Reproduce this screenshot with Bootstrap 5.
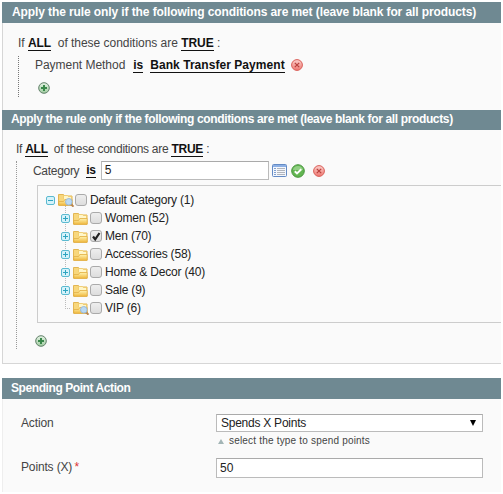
<!DOCTYPE html>
<html lang="en">
<head>
<meta charset="utf-8">
<meta name="viewport" content="width=device-width, initial-scale=1">
<title>Rule conditions</title>
<link href="https://cdn.jsdelivr.net/npm/bootstrap@5.3.0/dist/css/bootstrap.min.css" rel="stylesheet">
<style>
body{font:12px/18px "Liberation Sans",Arial,sans-serif;color:#444;background:#fff;overflow:hidden}
.page{width:499px;margin-left:2px;padding-top:2px;height:492px;overflow:hidden}
.bar{background:#6f8992;color:#fff;font-weight:700;white-space:nowrap}
.panel{background:#fafafa;border-left:1px solid #d6d6d6}
.ln{white-space:nowrap}
.ln b{color:#111;border-bottom:1px solid #111;line-height:13px;display:inline-block}
.ln.d-flex b{margin-top:1px}
.h1x{height:21px;line-height:20px;padding-left:10px;letter-spacing:-.1px}
.h2x{height:20px;line-height:19px;padding-left:9px;letter-spacing:-.36px}
.h3x{height:21px;line-height:20px;padding-left:9px;letter-spacing:-.42px}
.p1{height:87px;padding:11px 0 0 15px}
.p1 .ln{letter-spacing:-.03px}
.p2{height:234px;padding:10px 0 0 13px;border-bottom:1px solid #d6d6d6}
.p2>.ln{letter-spacing:-.27px}
.p3{height:94px;padding:15px 0 0 18px;border-left-color:#eee}
.rule1{border-left:1px dotted #777;height:41px;margin-top:4px;padding-left:16px}
.rule2{border-left:1px dotted #999;height:188px;margin-top:3px;padding-left:16px}
.catline{letter-spacing:-.3px}
.field{background:#fff;border:1px solid #bbb;border-top-color:#aaa;height:19px;line-height:17px;color:#222}
.tree{border:1px solid #ccc;border-right:0;height:138px;margin:5px 0 0 4px;padding:5px 0 0 8px;color:#222;position:relative}
.trow{height:18px;line-height:18px;white-space:nowrap}
.trow svg{position:relative;z-index:1}
.kid{padding-left:15px}
.ck{width:12px;height:12px;border:1px solid #aaa;border-radius:3px;background:linear-gradient(#eee,#ddd);flex:none}
.ck svg{margin:-1px}
svg{display:block;flex:none}
.guide{position:absolute;left:27px;top:19px;height:104px;border-left:1px dotted #bbb}
.lab{width:195px;letter-spacing:-.15px}
.bank{margin-left:7px;letter-spacing:.05px}
.del1{margin-left:6px}
.add1{margin:8px 0 0 3px}
.isb{margin-left:7px}
.catf{width:168px;margin-left:5px;padding-left:3px;letter-spacing:0}
.book{margin-left:3px}
.okic{margin-left:4px}
.del2{margin-left:8px}
.add2{margin:12px 0 0 2px}
.f{margin-left:3px;margin-right:2px}
.f.wide{margin-right:0}
.nm{margin-left:3px;letter-spacing:-.2px}
.s3{margin-top:14px}
.sel{width:267px;height:18px;padding:0 6px 0 4px;line-height:16px;letter-spacing:-.25px}
.pts{width:267px;padding-left:3px;height:20px;line-height:18px}
.hint{font-size:10px;line-height:17px;letter-spacing:.19px;color:#444}
.hint svg{margin:2px 5px 0 2px}
.prow{margin-top:9px}
.req{color:#d33;margin-left:-1px}
</style>
<script src="https://cdn.jsdelivr.net/npm/bootstrap@5.3.0/dist/js/bootstrap.bundle.min.js"></script>
</head>
<body>
<svg width="0" height="0" class="position-absolute">
<defs>
<linearGradient id="gy" x2="0" y2="1"><stop stop-color="#fff3b0"/><stop offset="1" stop-color="#efb73c"/></linearGradient>
<linearGradient id="gr" x2="0" y2="1"><stop stop-color="#fbd0cc"/><stop offset="1" stop-color="#ee7770"/></linearGradient>
<linearGradient id="gg" x2="0" y2="1"><stop stop-color="#e4f2e4"/><stop offset="1" stop-color="#9fcc9f"/></linearGradient>
<symbol id="add" viewBox="0 0 12 12"><circle cx="6" cy="6" r="5.3" fill="url(#gg)" stroke="#62806a"/><path d="M6 3v6M3 6h6" stroke="#39884a" stroke-width="2"/></symbol>
<symbol id="del" viewBox="0 0 12 12"><circle cx="6" cy="6" r="5.4" fill="url(#gr)" stroke="#d95d57"/><path d="M3.8 3.8l4.4 4.4M8.2 3.8L3.8 8.2" stroke="#b9413d" stroke-width="1.2"/></symbol>
<symbol id="fold" viewBox="0 0 15 13"><path d="M.5 12V1.5h5l1 1.5H14v9z" fill="#f8d77c" stroke="#e3b653"/><path d="M5.5 6V2.5h4l.8 1h3.2V6" fill="#fff6c9" stroke="#edc864" stroke-width=".8"/><path d="M.7 12.4V8.5h4.8L7 6.5h7.2v5.9z" fill="url(#gy)" stroke="#dfaa3e" stroke-width=".7"/></symbol>
<symbol id="look" viewBox="0 0 17 14"><use href="#fold" width="15" height="13"/><path d="M12.8 11l2.7 2.6" stroke="#b78450" stroke-width="2"/><circle cx="10.8" cy="8.8" r="3.3" fill="#b9daf5" stroke="#9bb9d7"/></symbol>
<symbol id="plus" viewBox="0 0 9 9"><rect x=".5" y=".5" width="8" height="8" rx="1.5" fill="#d5f2fa" stroke="#5bbad0"/><path d="M4.5 2v5M2 4.5h5" stroke="#2ea4c0"/></symbol>
<symbol id="minus" viewBox="0 0 9 9"><rect x=".5" y=".5" width="8" height="8" rx="1.5" fill="#d5f2fa" stroke="#5bbad0"/><path d="M2 4.5h5" stroke="#2ea4c0"/></symbol>
</defs>
</svg>
<main class="page">
<section>
<div class="bar h1x">Apply the rule only if the following conditions are met (leave blank for all products)</div>
<div class="panel p1">
<div class="ln">If <b>ALL</b> &nbsp;of these conditions are <b>TRUE</b> :</div>
<div class="rule1">
<div class="ln d-flex align-items-center"><span>Payment Method</span><b class="ms-2">is</b><b class="bank">Bank Transfer Payment</b><svg class="del1" width="12" height="12"><use href="#del"/></svg></div>
<svg class="add1" width="12" height="12"><use href="#add"/></svg>
</div>
</div>
</section>
<section>
<div class="bar h2x">Apply the rule only if the following conditions are met (leave blank for all products)</div>
<div class="panel p2">
<div class="ln">If <b>ALL</b> &nbsp;of these conditions are <b>TRUE</b> :</div>
<div class="rule2">
<div class="ln d-flex align-items-center catline"><span>Category</span><b class="isb">is</b><div class="field catf">5</div>
<svg class="book" width="15" height="13" viewBox="0 0 15 13"><rect x=".5" y=".5" width="14" height="12" rx="1" fill="#f4f7fc" stroke="#648bc5"/><path d="M1 2h13" stroke="#8db0e4" stroke-width="2"/><path d="M2 4.5h2M2 6.5h2M2 8.5h2M2 10.5h2" stroke="#7fa0d0"/><path d="M5 4.5h8M5 6.5h8M5 8.5h8M5 10.5h8" stroke="#b1b5bd"/></svg>
<svg class="okic" width="14" height="14" viewBox="0 0 14 14"><circle cx="7" cy="7" r="6.3" fill="#62b551" stroke="#48963d"/><path d="M2 6a5 4 0 0 1 10 0" fill="#91cf83"/><path d="M3.8 7.2l2.2 2.2 4.3-4.2" fill="none" stroke="#fff" stroke-width="2"/></svg>
<svg class="del2" width="12" height="12"><use href="#del"/></svg></div>
<div class="tree"><div class="guide"></div>
<div class="trow d-flex align-items-center"><svg width="9" height="9"><use href="#minus"/></svg><svg class="f wide" width="17" height="14"><use href="#look"/></svg><i class="ck"></i><span class="nm">Default Category (1)</span></div>
<div class="trow kid d-flex align-items-center"><svg width="9" height="9"><use href="#plus"/></svg><svg class="f" width="15" height="13"><use href="#fold"/></svg><i class="ck"></i><span class="nm">Women (52)</span></div>
<div class="trow kid d-flex align-items-center"><svg width="9" height="9"><use href="#plus"/></svg><svg class="f" width="15" height="13"><use href="#fold"/></svg><i class="ck"><svg width="12" height="12" viewBox="0 0 12 12"><path d="M3 6.5l2.2 2.8L9.5 3" fill="none" stroke="#222" stroke-width="2.2"/></svg></i><span class="nm">Men (70)</span></div>
<div class="trow kid d-flex align-items-center"><svg width="9" height="9"><use href="#plus"/></svg><svg class="f" width="15" height="13"><use href="#fold"/></svg><i class="ck"></i><span class="nm">Accessories (58)</span></div>
<div class="trow kid d-flex align-items-center"><svg width="9" height="9"><use href="#plus"/></svg><svg class="f" width="15" height="13"><use href="#fold"/></svg><i class="ck"></i><span class="nm">Home &amp; Decor (40)</span></div>
<div class="trow kid d-flex align-items-center"><svg width="9" height="9"><use href="#plus"/></svg><svg class="f" width="15" height="13"><use href="#fold"/></svg><i class="ck"></i><span class="nm">Sale (9)</span></div>
<div class="trow kid d-flex align-items-center"><svg width="9" height="9" viewBox="0 0 9 9"><path d="M4 4.5h5" stroke="#bbb" stroke-dasharray="1 1"/></svg><svg class="f wide" width="17" height="14"><use href="#look"/></svg><i class="ck"></i><span class="nm">VIP (6)</span></div>
</div>
<svg class="add2" width="12" height="12"><use href="#add"/></svg>
</div>
</div>
</section>
<section class="s3">
<div class="bar h3x">Spending Point Action</div>
<div class="panel p3">
<div class="d-flex"><label class="lab">Action</label><div>
<div class="field sel d-flex justify-content-between align-items-center"><span>Spends X Points</span><svg width="6" height="6" viewBox="0 0 6 6"><path d="M0 0h6L3 6z" fill="#000"/></svg></div>
<div class="hint d-flex align-items-center"><svg width="6" height="5" viewBox="0 0 6 5"><path d="M0 5h6L3 0z" fill="#a3b5b6"/></svg><span>select the type to spend points</span></div></div></div>
<div class="d-flex prow"><label class="lab">Points (X) <span class="req">*</span></label><div class="field pts">50</div></div>
</div>
</section>
</main>
</body>
</html>
